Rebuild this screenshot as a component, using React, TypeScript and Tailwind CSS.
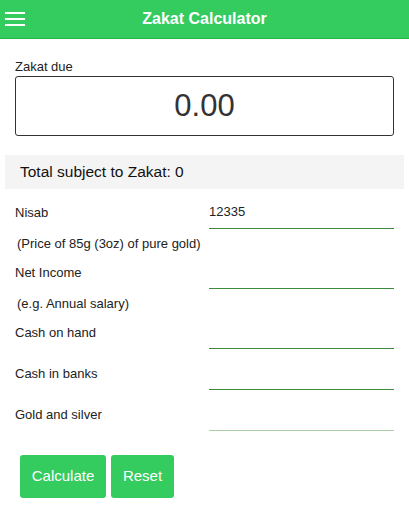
import React from "react";

const font = { fontFamily: '"Liberation Sans", Arial, sans-serif' };

function Field({ label, sub, value, last }: { label: string; sub?: string; value?: string; last?: boolean }) {
  return (
    <div className="flex flex-col">
      <div className="flex items-end">
        <div className="w-[209px] pl-[15px] pb-[7px] text-[13px] text-[#222]">{label}</div>
        <div className={`w-[185px] h-[30px] flex items-end pb-[7px] text-[13px] text-[#222] border-b ${last ? "border-[#a9cfa9]" : "border-[#3d8c3d]"}`}>
          {value}
        </div>
      </div>
      {sub && <div className="pl-[17px] pt-[7px] pb-[4px] text-[13px] text-[#222] leading-[15px]">{sub}</div>}
    </div>
  );
}

export default function App() {
  return (
    <div className="w-[409px] h-[512px] bg-white overflow-hidden" style={font}>
      <div className="h-[39px] bg-[#34cb5f] border-b-[1.5px] border-[#1fb847] relative flex items-center justify-center">
        <div className="absolute left-[5px] top-[12px] flex flex-col gap-[4px]">
          <div className="w-[20px] h-[2px] bg-white" />
          <div className="w-[20px] h-[2px] bg-white" />
          <div className="w-[20px] h-[2px] bg-white" />
        </div>
        <div className="text-white font-bold text-[16px]">Zakat Calculator</div>
      </div>
      <div className="pt-[20px] px-[15px]">
        <div className="text-[13px] text-[#222] leading-[16px]">Zakat due</div>
        <div className="mt-[1px] h-[60px] border border-[#333] rounded-[3px] flex items-center justify-center text-[31px] text-[#333]">
          0.00
        </div>
      </div>
      <div className="mx-[5px] mt-[19px] h-[34px] bg-[#f4f4f4] flex items-center pl-[15px] text-[15.5px] text-[#111]">
        Total subject to Zakat: 0
      </div>
      <div className="mt-[10px] flex flex-col gap-[4px]">
        <Field label="Nisab" sub="(Price of 85g (3oz) of pure gold)" value="12335" />
        <Field label="Net Income" sub="(e.g. Annual salary)" />
        <Field label="Cash on hand" />
        <div className="mt-[7px]"><Field label="Cash in banks" /></div>
        <div className="mt-[7px]"><Field label="Gold and silver" last /></div>
      </div>
      <div className="flex gap-[5px] pl-[20px] mt-[24px]">
        <button className="w-[86px] h-[43px] bg-[#34cb5f] rounded-[3px] text-white text-[15px]">Calculate</button>
        <button className="w-[63px] h-[43px] bg-[#34cb5f] rounded-[3px] text-white text-[15px]">Reset</button>
      </div>
    </div>
  );
}
